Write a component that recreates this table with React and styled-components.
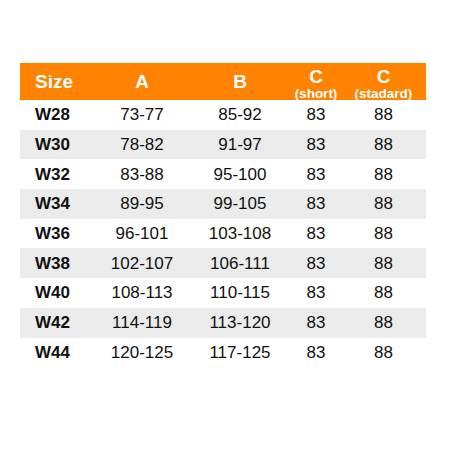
import React from 'react';
import styled, { createGlobalStyle } from 'styled-components';

const ROWS = [
  ['W28', '73-77', '85-92', '83', '88'],
  ['W30', '78-82', '91-97', '83', '88'],
  ['W32', '83-88', '95-100', '83', '88'],
  ['W34', '89-95', '99-105', '83', '88'],
  ['W36', '96-101', '103-108', '83', '88'],
  ['W38', '102-107', '106-111', '83', '88'],
  ['W40', '108-113', '110-115', '83', '88'],
  ['W42', '114-119', '113-120', '83', '88'],
  ['W44', '120-125', '117-125', '83', '88'],
];

const GlobalStyle = createGlobalStyle`
  html, body {
    margin: 0;
    padding: 0;
    background: #ffffff;
  }
  body {
    font-family: "Liberation Sans", Arial, sans-serif;
  }
`;

const Page = styled.div`
  width: 450px;
  height: 450px;
  padding: 63px 24px 0 20px;
  box-sizing: border-box;
`;

const Table = styled.div`
  width: 406px;
`;

const Row = styled.div`
  display: grid;
  grid-template-columns: 75px 94px 102px 50px 85px;
  align-items: center;
  height: ${p => (p.$head ? '37px' : '29.7px')};
  background: ${p => (p.$head ? '#ff8200' : p.$shaded ? '#ebebeb' : '#ffffff')};
  color: ${p => (p.$head ? '#ffffff' : '#111111')};
`;

const Cell = styled.div`
  text-align: ${p => (p.$first ? 'left' : 'center')};
  padding-left: ${p => (p.$first ? '15px' : '0')};
  font-size: 17px;
  font-weight: ${p => (p.$first ? 700 : 400)};
  line-height: 1;
  white-space: nowrap;
`;

const HeadCell = styled.div`
  text-align: ${p => (p.$first ? 'left' : 'center')};
  padding-left: ${p => (p.$first ? '15px' : '0')};
  font-size: 19px;
  font-weight: 700;
  line-height: 1;
  white-space: nowrap;
`;

const HeadSub = styled.div`
  font-size: 13.5px;
  font-weight: 700;
  line-height: 13px;
  white-space: nowrap;
`;

const HeadStack = styled.div`
  display: flex;
  flex-direction: column;
  align-items: center;
  padding-top: 3px;
  gap: 1px;
`;

export default function App() {
  return (
    <Page>
      <GlobalStyle />
      <Table>
        <Row $head>
          <HeadCell $first>Size</HeadCell>
          <HeadCell>A</HeadCell>
          <HeadCell>B</HeadCell>
          <HeadStack>
            <HeadCell>C</HeadCell>
            <HeadSub>(short)</HeadSub>
          </HeadStack>
          <HeadStack>
            <HeadCell>C</HeadCell>
            <HeadSub>(stadard)</HeadSub>
          </HeadStack>
        </Row>
        {ROWS.map((row, i) => (
          <Row key={row[0]} $shaded={i % 2 === 1}>
            {row.map((value, j) => (
              <Cell key={j} $first={j === 0}>
                {value}
              </Cell>
            ))}
          </Row>
        ))}
      </Table>
    </Page>
  );
}
